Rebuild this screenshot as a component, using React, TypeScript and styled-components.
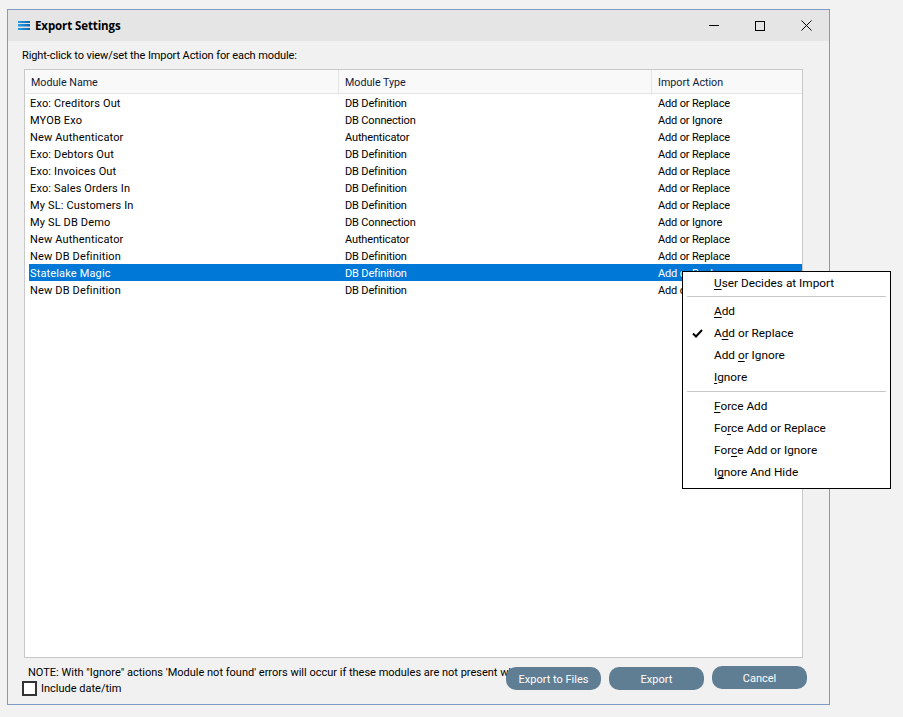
import * as React from 'react'
import styled, { createGlobalStyle } from 'styled-components'

const GlobalStyle = createGlobalStyle`
  html, body {
    margin: 0;
    height: 100%;
    background: #f2f2f2;
    overflow: hidden;
  }
  body {
    font-family: Roboto, "Open Sans", "Liberation Sans", sans-serif;
    font-size: 11px;
    color: #000;
  }
`

const Page = styled.div`
  position: relative;
  width: 903px;
  height: 717px;
  padding: 9px 0 0 7px;
  box-sizing: border-box;
`

const Window = styled.div`
  width: 823px;
  height: 696px;
  box-sizing: border-box;
  border: 1px solid #7f9ac4;
  background: #f1f1f1;
  display: flex;
  flex-direction: column;
`

const TitleBar = styled.div`
  height: 31px;
  flex: none;
  background: #e5e5e5;
  display: flex;
  align-items: center;
  padding-left: 10px;
`

const TitleText = styled.div`
  margin-left: 4px;
  font-family: "Open Sans", sans-serif;
  font-weight: 700;
  font-size: 11.5px;
  letter-spacing: -0.1px;
  flex: 1;
`

const WinControls = styled.div`
  display: flex;
`

const WinButton = styled.div`
  width: 46px;
  height: 31px;
  display: flex;
  align-items: center;
  justify-content: center;
`

const Hint = styled.div`
  flex: none;
  height: 16px;
  line-height: 16px;
  margin: 7px 0 5px 14px;
  letter-spacing: -0.1px;
`

const List = styled.div`
  flex: none;
  margin-left: 16px;
  width: 779px;
  height: 589px;
  box-sizing: border-box;
  border: 1px solid #c8c8c8;
  background: #fff;
`

const HeaderRow = styled.div`
  display: grid;
  grid-template-columns: 314px 313px 1fr;
  height: 24px;
  box-sizing: border-box;
  background: #f9f9f9;
  border-bottom: 1px solid #e5e5e5;
`

const HeaderCell = styled.div`
  padding-left: 6px;
  line-height: 25px;
  font-size: 10.7px;
  color: #10203a;
  border-right: 1px solid ${p => (p.$last ? 'transparent' : '#e5e5e5')};
`

const Row = styled.div`
  display: grid;
  grid-template-columns: 315px 313px 1fr;
  height: 17px;
  line-height: 19px;
  margin-left: 4px;
  background: ${p => (p.$selected ? '#0078d7' : 'transparent')};
  color: ${p => (p.$selected ? '#fff' : '#000')};
`

const Cell = styled.div`
  padding-left: 1px;
  white-space: nowrap;
  letter-spacing: ${p => (p.$wide ? '0.15px' : '-0.15px')};
`

const Footer = styled.div`
  position: relative;
  flex: 1;
  padding-left: 14px;
`

const Note = styled.div`
  height: 16px;
  line-height: 16px;
  margin: 7px 0 0 6px;
  white-space: nowrap;
`

const CheckRow = styled.label`
  display: flex;
  align-items: center;
  height: 16px;
  margin-top: -1px;
`

const CheckBox = styled.span`
  width: 11px;
  height: 11px;
  border: 2px solid #333;
  background: #fff;
  margin-right: 4px;
`

const ButtonBar = styled.div`
  position: absolute;
  top: 9px;
  left: 498px;
  display: flex;
  gap: 8px;
  align-items: flex-start;
`

const ActionButton = styled.button`
  width: 95px;
  height: 23px;
  padding: 1px 0 0;
  margin-top: ${p => (p.$raised ? '-1px' : '0')};
  border: none;
  border-radius: 10px;
  background: #5f7d93;
  color: #fff;
  font: inherit;
`

const Menu = styled.div`
  position: absolute;
  left: 682px;
  top: 271px;
  width: 209px;
  height: 218px;
  box-sizing: border-box;
  border: 1px solid #000;
  background: #fff;
`

const MenuItem = styled.div`
  position: relative;
  height: 22px;
  line-height: 22px;
  padding-left: 31px;
  white-space: nowrap;
  color: #000;
  font-size: 11.8px;
  u { text-underline-offset: 2px; }
`

const MenuCheck = styled.svg`
  position: absolute;
  left: 9px;
  top: 7px;
`

const MenuRule = styled.div`
  height: 1px;
  background: #c9c9c9;
  margin: ${p => (p.$tall ? '3px 4px 3px' : '2px 4px 3px')};
`

type Module = { name: string; type: string; action: string; selected?: boolean }

const modules: Module[] = [
  { name: 'Exo: Creditors Out', type: 'DB Definition', action: 'Add or Replace' },
  { name: 'MYOB Exo', type: 'DB Connection', action: 'Add or Ignore' },
  { name: 'New Authenticator', type: 'Authenticator', action: 'Add or Replace' },
  { name: 'Exo: Debtors Out', type: 'DB Definition', action: 'Add or Replace' },
  { name: 'Exo: Invoices Out', type: 'DB Definition', action: 'Add or Replace' },
  { name: 'Exo: Sales Orders In', type: 'DB Definition', action: 'Add or Replace' },
  { name: 'My SL: Customers In', type: 'DB Definition', action: 'Add or Replace' },
  { name: 'My SL DB Demo', type: 'DB Connection', action: 'Add or Ignore' },
  { name: 'New Authenticator', type: 'Authenticator', action: 'Add or Replace' },
  { name: 'New DB Definition', type: 'DB Definition', action: 'Add or Replace' },
  { name: 'Statelake Magic', type: 'DB Definition', action: 'Add or Replace', selected: true },
  { name: 'New DB Definition', type: 'DB Definition', action: 'Add or Replace' },
]

const AppIcon = () => (
  <svg width="13" height="10" viewBox="0 0 13 10">
    <defs>
      <linearGradient id="barFill" x1="0" x2="1" y1="0" y2="0">
        <stop offset="0" stopColor="#2a9fe0" />
        <stop offset="1" stopColor="#0b63b0" />
      </linearGradient>
    </defs>
    <rect x="0" y="0" width="12" height="2" fill="url(#barFill)" />
    <rect x="0" y="3" width="12" height="2.5" fill="url(#barFill)" />
    <rect x="0" y="7" width="12" height="2" fill="url(#barFill)" />
  </svg>
)

export default function App() {
  return (
    <Page>
      <GlobalStyle />
      <Window>
        <TitleBar>
          <AppIcon />
          <TitleText>Export Settings</TitleText>
          <WinControls>
            <WinButton>
              <svg width="10" height="10" viewBox="0 0 10 10">
                <path d="M0 4.5H10" stroke="#000" strokeWidth="1" />
              </svg>
            </WinButton>
            <WinButton>
              <svg width="10" height="10" viewBox="0 0 10 10">
                <rect x="0.5" y="0.5" width="9" height="9" fill="none" stroke="#000" />
              </svg>
            </WinButton>
            <WinButton>
              <svg width="11" height="11" viewBox="0 0 11 11">
                <path d="M0.5 0.5L10.5 10.5M10.5 0.5L0.5 10.5" stroke="#000" strokeWidth="1" />
              </svg>
            </WinButton>
          </WinControls>
        </TitleBar>
        <Hint>Right-click to view/set the Import Action for each module:</Hint>
        <List>
          <HeaderRow>
            <HeaderCell>Module Name</HeaderCell>
            <HeaderCell>Module Type</HeaderCell>
            <HeaderCell $last>Import Action</HeaderCell>
          </HeaderRow>
          {modules.map((m, i) => (
            <Row key={i} $selected={m.selected}>
              <Cell $wide>{m.name}</Cell>
              <Cell>{m.type}</Cell>
              <Cell>{m.action}</Cell>
            </Row>
          ))}
        </List>
        <Footer>
          <Note>NOTE: With "Ignore" actions 'Module not found' errors will occur if these modules are not present wh</Note>
          <CheckRow>
            <CheckBox />
            Include date/tim
          </CheckRow>
          <ButtonBar>
            <ActionButton>Export to Files</ActionButton>
            <ActionButton>Export</ActionButton>
            <ActionButton $raised>Cancel</ActionButton>
          </ButtonBar>
        </Footer>
      </Window>
      <Menu>
        <MenuItem><u>U</u>ser Decides at Import</MenuItem>
        <MenuRule />
        <MenuItem><u>A</u>dd</MenuItem>
        <MenuItem>
          <MenuCheck width="11" height="9" viewBox="0 0 11 9">
            <path d="M1 4.5L4 7.5L10 1" fill="none" stroke="#000" strokeWidth="2" />
          </MenuCheck>
          A<u>d</u>d or Replace
        </MenuItem>
        <MenuItem>Add <u>o</u>r Ignore</MenuItem>
        <MenuItem><u>I</u>gnore</MenuItem>
        <MenuRule $tall />
        <MenuItem><u>F</u>orce Add</MenuItem>
        <MenuItem>Fo<u>r</u>ce Add or Replace</MenuItem>
        <MenuItem>For<u>c</u>e Add or Ignore</MenuItem>
        <MenuItem>I<u>g</u>nore And Hide</MenuItem>
      </Menu>
    </Page>
  )
}
